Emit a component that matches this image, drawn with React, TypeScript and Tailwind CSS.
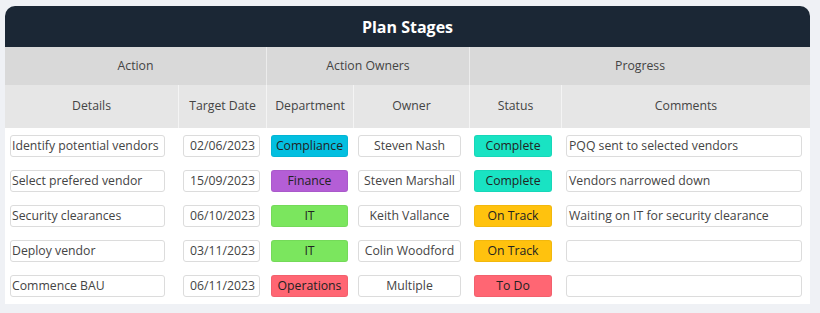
import React from 'react';

type Row = {
    details: string;
    date: string;
    dept: string;
    owner: string;
    status: string;
    comment: string;
};

const rows: Row[] = [
    { details: 'Identify potential vendors', date: '02/06/2023', dept: 'Compliance', owner: 'Steven Nash', status: 'Complete', comment: 'PQQ sent to selected vendors' },
    { details: 'Select prefered vendor', date: '15/09/2023', dept: 'Finance', owner: 'Steven Marshall', status: 'Complete', comment: 'Vendors narrowed down' },
    { details: 'Security clearances', date: '06/10/2023', dept: 'IT', owner: 'Keith Vallance', status: 'On Track', comment: 'Waiting on IT for security clearance' },
    { details: 'Deploy vendor', date: '03/11/2023', dept: 'IT', owner: 'Colin Woodford', status: 'On Track', comment: '' },
    { details: 'Commence BAU', date: '06/11/2023', dept: 'Operations', owner: 'Multiple', status: 'To Do', comment: '' },
];

const deptColors: Record<string, string> = {
    Compliance: 'bg-[#03bfe0]',
    Finance: 'bg-[#b45ed6]',
    IT: 'bg-[#7be65e]',
    Operations: 'bg-[#ff6673]',
};

const statusColors: Record<string, string> = {
    Complete: 'bg-[#19e3c3]',
    'On Track': 'bg-[#ffc20e]',
    'To Do': 'bg-[#ff6673]',
};

const cols = 'grid grid-cols-[173px_88px_87px_116px_92px_249px]';

function Field({ value, className }: { value: string; className: string }) {
    return (
        <div className={`h-[22px] rounded-[3px] border border-[#dcdcdc] bg-white leading-[20px] text-[#444] whitespace-nowrap overflow-hidden ${className}`}>
            {value}
        </div>
    );
}

function Badge({ value, color, className }: { value: string; color: string; className: string }) {
    return (
        <div className={`h-[22px] rounded-[3px] border border-black/5 text-center leading-[20px] text-[#222] ${color} ${className}`}>
            {value}
        </div>
    );
}

export default function App() {
    return (
        <div className="min-h-screen bg-[#eff1f5] pt-[6px] pl-[5px] text-[12.25px]" style={{ fontFamily: '"Open Sans", sans-serif' }}>
            <div className="w-[805px]">
                <div className="h-[41px] rounded-t-[10px] bg-[#1b2735] flex items-center justify-center">
                    <h1 className="text-white text-[16px] font-bold">Plan Stages</h1>
                </div>

                <div className="grid grid-cols-[261px_203px_341px] h-[38px] bg-[#d9d9d9] text-[#444]">
                    <div className="flex items-center justify-center">Action</div>
                    <div className="flex items-center justify-center border-l border-[#ececec]">Action Owners</div>
                    <div className="flex items-center justify-center border-l border-[#ececec]">Progress</div>
                </div>

                <div className={`${cols} h-[43px] bg-[#e6e6e6] text-[#444]`}>
                    <div className="flex items-center justify-center">Details</div>
                    <div className="flex items-center justify-center border-l border-[#f4f4f4]">Target Date</div>
                    <div className="flex items-center justify-center border-l border-[#f4f4f4]">Department</div>
                    <div className="flex items-center justify-center border-l border-[#f4f4f4]">Owner</div>
                    <div className="flex items-center justify-center border-l border-[#f4f4f4]">Status</div>
                    <div className="flex items-center justify-center border-l border-[#f4f4f4]">Comments</div>
                </div>

                <div className="bg-white pb-[1px]">
                    {rows.map((r) => (
                        <div key={r.details} className={`${cols} h-[35px] items-center`}>
                            <div className="pl-[5px]">
                                <Field value={r.details} className="w-[155px] pl-[1px]" />
                            </div>
                            <div className="pl-[5px]">
                                <Field value={r.date} className="w-[77px] text-right pr-[4px]" />
                            </div>
                            <div className="pl-[5px]">
                                <Badge value={r.dept} color={deptColors[r.dept]} className="w-[77px]" />
                            </div>
                            <div className="pl-[5px]">
                                <Field value={r.owner} className="w-[103px] text-center" />
                            </div>
                            <div className="pl-[5px]">
                                <Badge value={r.status} color={statusColors[r.status]} className="w-[78px]" />
                            </div>
                            <div className="pl-[5px]">
                                <Field value={r.comment} className="w-[236px] pl-[2px]" />
                            </div>
                        </div>
                    ))}
                </div>
            </div>
        </div>
    );
}
